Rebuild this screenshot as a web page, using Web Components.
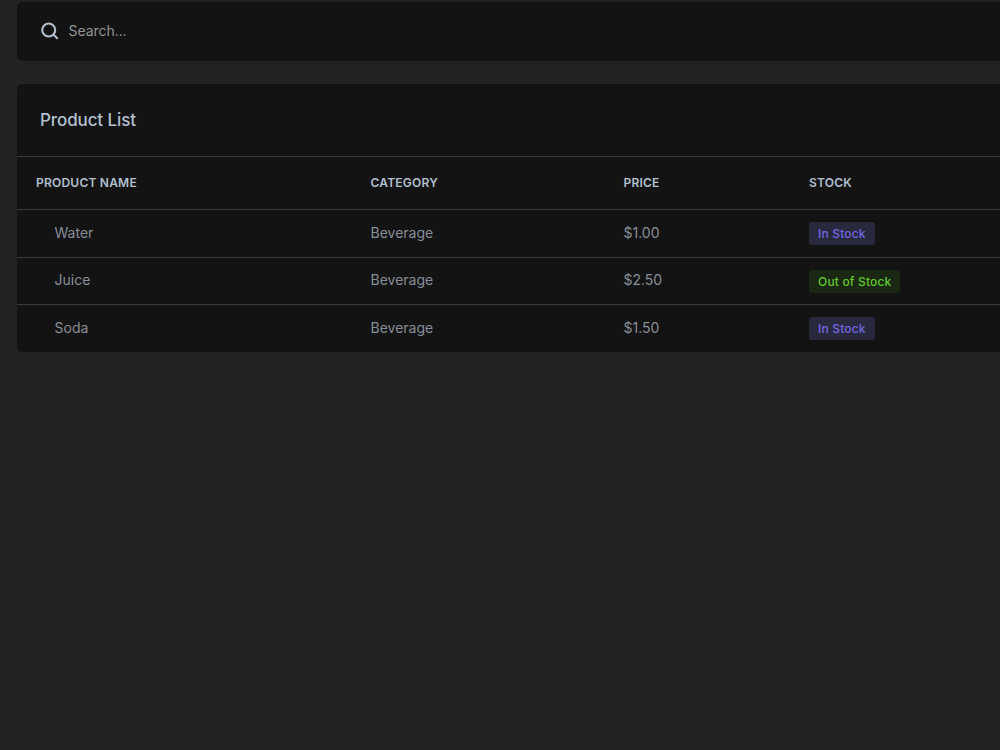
<!DOCTYPE html>
<html lang="en">
<head>
    <meta charset="utf-8">
    <title>Product List</title>
    <style>
        body {
            margin: 0;
            height: 750px;
            overflow: hidden;
            background: #232325;
            font-family: Inter, 'Liberation Sans', sans-serif;
        }
    </style>
</head>
<body>
    <products-page>
        <search-bar placeholder="Search..."></search-bar>
        <product-table heading="Product List">
            <product-row name="Water" category="Beverage" price="$1.00">
                <stock-badge>In Stock</stock-badge>
            </product-row>
            <product-row name="Juice" category="Beverage" price="$2.50">
                <stock-badge out>Out of Stock</stock-badge>
            </product-row>
            <product-row name="Soda" category="Beverage" price="$1.50">
                <stock-badge>In Stock</stock-badge>
            </product-row>
        </product-table>
    </products-page>

    <script>
        function define(name, html, setup) {
            const template = document.createElement('template')
            template.innerHTML = html

            window.customElements.define(name, class extends HTMLElement {
                constructor() {
                    super()

                    this.attachShadow({ mode: 'open' })
                    this.shadowRoot.appendChild(template.content.cloneNode(true))
                    if (setup) setup(this, this.shadowRoot)
                }
            })
        }

        define('products-page', `
            <style>
                :host {
                    display: flex;
                    flex-direction: column;
                    gap: 23px;
                    padding: 2px 0 0 17px;
                    --card: #131313;
                    --line: #3a3a3b;
                    --heading: #b2c0cf;
                    --text: #878e98;
                    --columns: 334.5px 253px 185.5px 1fr;
                }
            </style>
            <slot></slot>
        `)

        define('search-bar', `
            <style>
                :host {
                    display: flex;
                    align-items: center;
                    gap: 8.5px;
                    height: 59px;
                    padding-left: 24px;
                    border-radius: 5px 0 0 5px;
                    background: var(--card);
                }

                svg {
                    width: 19px;
                    height: 19px;
                    fill: none;
                    stroke: var(--heading);
                    stroke-width: 2.1;
                }

                span {
                    padding-bottom: 2px;
                    font-size: 14px;
                    line-height: 20px;
                    letter-spacing: -0.05px;
                    color: #919395;
                }
            </style>
            <svg viewBox="0 0 19 19">
                <circle cx="7.7" cy="8" r="6.5" />
                <path d="M12.3 12.6l4.4 4.2" />
            </svg>
            <span></span>
        `, (el, root) => {
            root.querySelector('span').innerText = el.getAttribute('placeholder')
        })

        define('product-table', `
            <style>
                :host {
                    display: block;
                    height: 267.5px;
                    border-radius: 5px 0 0 5px;
                    background: var(--card);
                    color: var(--heading);
                }

                h2 {
                    display: flex;
                    align-items: center;
                    height: 72px;
                    margin: 0;
                    padding-left: 23px;
                    font-size: 17px;
                    font-weight: 550;
                    letter-spacing: -0.1px;
                }

                header {
                    display: grid;
                    grid-template-columns: var(--columns);
                    align-items: center;
                    height: 50px;
                    padding: 0 0 2px 19px;
                    border-top: 1px solid var(--line);
                    font-size: 12px;
                    font-weight: 600;
                    letter-spacing: 0.22px;
                }
            </style>
            <h2></h2>
            <header>
                <span>PRODUCT NAME</span>
                <span>CATEGORY</span>
                <span>PRICE</span>
                <span>STOCK</span>
            </header>
            <slot></slot>
        `, (el, root) => {
            root.querySelector('h2').innerText = el.getAttribute('heading')
        })

        define('product-row', `
            <style>
                :host {
                    display: grid;
                    grid-template-columns: var(--columns);
                    align-items: center;
                    height: 46.5px;
                    padding-left: 19px;
                    border-top: 1px solid var(--line);
                    color: var(--text);
                    font-size: 14px;
                }

                span {
                    padding-bottom: 2px;
                }

                .name {
                    padding-left: 18.5px;
                }
            </style>
            <span class="name"></span>
            <span class="category"></span>
            <span class="price"></span>
            <slot></slot>
        `, (el, root) => {
            for (const key of ['name', 'category', 'price']) {
                root.querySelector('.' + key).innerText = el.getAttribute(key)
            }
        })

        define('stock-badge', `
            <style>
                :host {
                    display: block;
                    justify-self: start;
                    margin-top: 1px;
                    padding: 0 9px;
                    border-radius: 3px;
                    background: #29293d;
                    color: #7268e2;
                    font-size: 12px;
                    font-weight: 500;
                    line-height: 23px;
                    letter-spacing: 0.18px;
                }

                :host([out]) {
                    background: #192713;
                    color: #61c92b;
                }
            </style>
            <slot></slot>
        `)
    </script>
</body>
</html>
